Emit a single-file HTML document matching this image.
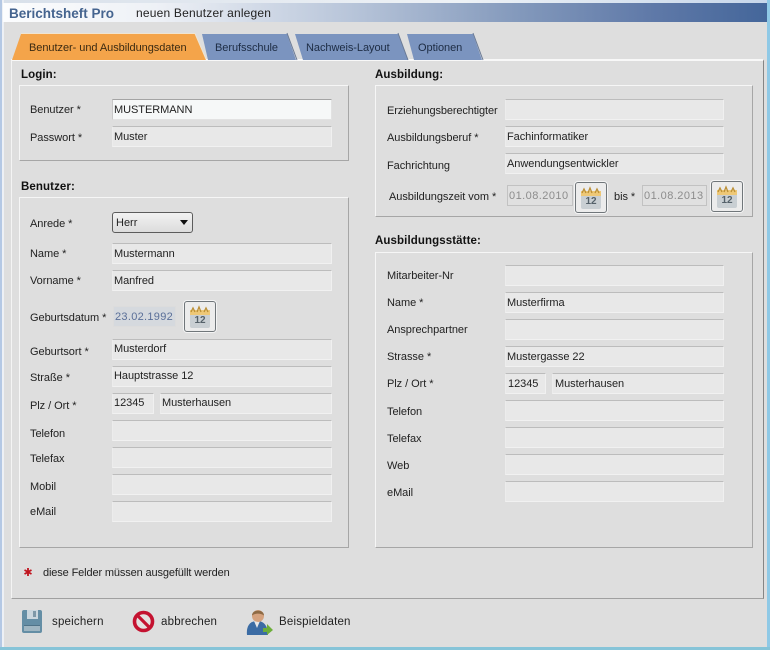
<!DOCTYPE html>
<html lang="de">
<head>
<meta charset="utf-8">
<title>Berichtsheft Pro</title>
<style>
html,body{margin:0;padding:0;background:#dedede}
#w{position:relative;width:770px;height:650px;overflow:hidden;background:#dedede;font-family:"Liberation Sans",sans-serif;font-size:11px;color:#222}
#w div,#w svg{position:absolute}
.l{height:14px;line-height:14px;white-space:nowrap;letter-spacing:-.05px}
.b{font-size:11.5px;letter-spacing:.2px}
.h{height:14px;line-height:14px;white-space:nowrap;font-weight:bold;color:#111;font-size:11.5px;letter-spacing:.1px}
.f{box-sizing:border-box;height:21px;left:112px;width:220px;background:#e8e8e8;border-top:1px solid #bcbcbc;border-left:1px solid #ececec;border-right:1px solid #f0f0f0;border-bottom:1px solid #f1f1f1;padding-left:1px;line-height:20px;white-space:nowrap;letter-spacing:-.05px}
.r{left:505px;width:219px;padding-left:1px}
.fs{box-sizing:border-box;background:#dedede;border-top:1px solid #f6f6f6;border-left:1px solid #f6f6f6;border-right:1px solid #a6a6a6;border-bottom:1px solid #a6a6a6}
.d{box-sizing:border-box;height:21px;background:#e0e0e0;border:1px solid #c2c2c2;color:#8c8c8c;line-height:20px;padding-left:1px;letter-spacing:.45px;white-space:nowrap}
.c{box-sizing:border-box;width:32px;height:31px;border:1px solid #70767a;border-radius:3px;background:#ececec;box-shadow:0 0 0 1px #f4f4f4}
</style>
</head>
<body>
<div id="w">
<!-- window frame -->
<div style="left:0;top:0;width:770px;height:3px;background:linear-gradient(90deg,#d8e0ea,#eef2f6 60%,#c6d6ea)"></div>
<div style="left:0;top:0;width:2px;height:650px;background:#b4c8e4"></div>
<div style="left:2px;top:0;width:2px;height:650px;background:#edf0f5"></div>
<div style="left:767px;top:0;width:3px;height:650px;background:#8fc9e6"></div>
<div style="left:0;top:647px;width:770px;height:3px;background:#86c4d8"></div>

<!-- title bar -->
<div style="left:3px;top:3px;width:764px;height:19px;background:linear-gradient(90deg,#fcfdfe 0%,#eef1f6 20%,#b9c6da 45%,#8298bb 68%,#5f79a8 85%,#44669a 100%)"></div>
<div style="left:9px;top:6px;height:15px;line-height:15px;font-size:13.500px;font-weight:bold;color:#45648f;white-space:nowrap">Berichtsheft Pro</div>
<div style="left:136px;top:6px;height:15px;line-height:15px;font-size:12px;letter-spacing:.2px;color:#222;white-space:nowrap">neuen Benutzer anlegen</div>

<!-- main panel -->
<div style="left:11px;top:59px;width:753px;height:540px;box-sizing:border-box;background:#dedede;border-top:2px solid #f8f8f8;border-left:1px solid #f4f4f4;border-right:1px solid #858585;border-bottom:1px solid #a0a0a0"></div>

<!-- tabs -->
<svg style="left:0;top:28px" width="500" height="34" viewBox="0 28 500 34">
<polygon points="202,34 287,34 296,60 208,60" fill="#7b94bf"/>
<polygon points="295,34 398,34 408,60 303,60" fill="#7b94bf"/>
<polygon points="407,34 473,34 482,60 414,60" fill="#7b94bf"/>
<polygon points="12,60 21,34 195,34 206,60" fill="#f4a44a"/>
<polyline points="21,33.500 195,33.500 206,59" fill="none" stroke="#f0e4d0" stroke-width="1"/>
<polyline points="287,33 297,60" fill="none" stroke="#6a7a95" stroke-width="1"/>
<polyline points="398,33 408,60" fill="none" stroke="#6a7a95" stroke-width="1"/>
<polyline points="473,33 483,60" fill="none" stroke="#6a7a95" stroke-width="1"/>
</svg>
<div class="l" style="left:29px;top:41px;color:#3a2a12">Benutzer- und Ausbildungsdaten</div>
<div class="l" style="left:215px;top:41px;color:#1d2c44">Berufsschule</div>
<div class="l" style="left:306px;top:41px;color:#1d2c44">Nachweis-Layout</div>
<div class="l" style="left:418px;top:41px;color:#1d2c44">Optionen</div>

<!-- headings -->
<div class="h" style="left:21px;top:68px">Login:</div>
<div class="h" style="left:375px;top:68px">Ausbildung:</div>
<div class="h" style="left:21px;top:180px">Benutzer:</div>
<div class="h" style="left:375px;top:234px">Ausbildungsstätte:</div>

<!-- fieldsets -->
<div class="fs" style="left:19px;top:85px;width:330px;height:76px"></div>
<div class="fs" style="left:19px;top:197px;width:330px;height:351px"></div>
<div class="fs" style="left:375px;top:85px;width:378px;height:132px"></div>
<div class="fs" style="left:375px;top:252px;width:378px;height:296px"></div>

<!-- login -->
<div class="l" style="left:30px;top:103px">Benutzer *</div>
<div class="f" style="top:99px;background:#f6f8f8;border-top:1px solid #a4a4a4;border-left:1px solid #c8c8c8;border-right:1px solid #e2e2e2;border-bottom:1px solid #e2e2e2">MUSTERMANN</div>
<div class="l" style="left:30px;top:131px">Passwort *</div>
<div class="f" style="top:126px">Muster</div>

<!-- benutzer -->
<div class="l" style="left:30px;top:217px">Anrede *</div>
<div style="left:112px;top:212px;width:81px;height:21px;box-sizing:border-box;border:1px solid #5c5c5c;border-radius:3px;background:linear-gradient(#f2f2f2,#dcdcdc);padding-left:3px;line-height:20px;color:#222">Herr</div>
<svg style="left:180px;top:220px" width="9" height="5"><polygon points="0,0 8,0 4,5" fill="#111"/></svg>
<div class="l" style="left:30px;top:247px">Name *</div>
<div class="f" style="top:243px">Mustermann</div>
<div class="l" style="left:30px;top:274px">Vorname *</div>
<div class="f" style="top:270px">Manfred</div>
<div class="l" style="left:30px;top:311px">Geburtsdatum *</div>
<div class="d" style="left:113px;top:306px;width:63px;background:#d5d9de;border-color:#dcdcdc;color:#5a6f98;letter-spacing:.3px">23.02.1992</div>
<div class="c" style="left:184px;top:301px"></div>
<svg style="left:186px;top:303px" width="28" height="27" viewBox="0 0 28 27"><rect x="4" y="7" width="20" height="18" rx="2" fill="#c9cfd3"/><rect x="4" y="7" width="20" height="5" fill="#eec877"/><path d="M5 9l2-4 2 4M11 9l2-5 2 5M18 9l2-4 2 4" fill="none" stroke="#bb8f35" stroke-width="1.300"/><text x="14" y="20" font-size="10" font-weight="bold" fill="#55616a" text-anchor="middle" font-family="Liberation Sans,sans-serif">12</text></svg>
<div class="l" style="left:30px;top:345px">Geburtsort *</div>
<div class="f" style="top:339px;line-height:19px">Musterdorf</div>
<div class="l" style="left:30px;top:371px">Straße *</div>
<div class="f" style="top:366px;line-height:19px">Hauptstrasse 12</div>
<div class="l" style="left:30px;top:399px">Plz / Ort *</div>
<div class="f" style="top:393px;width:42px;line-height:19px">12345</div>
<div class="f" style="top:393px;left:160px;width:172px;line-height:19px">Musterhausen</div>
<div class="l" style="left:30px;top:427px">Telefon</div>
<div class="f" style="top:420px"></div>
<div class="l" style="left:30px;top:452px">Telefax</div>
<div class="f" style="top:447px"></div>
<div class="l" style="left:30px;top:480px">Mobil</div>
<div class="f" style="top:474px"></div>
<div class="l" style="left:30px;top:505px">eMail</div>
<div class="f" style="top:501px"></div>

<!-- ausbildung -->
<div class="l" style="left:387px;top:104px;letter-spacing:-.12px">Erziehungsberechtigter</div>
<div class="f r" style="top:99px"></div>
<div class="l" style="left:387px;top:131px">Ausbildungsberuf *</div>
<div class="f r" style="top:126px">Fachinformatiker</div>
<div class="l" style="left:387px;top:159px">Fachrichtung</div>
<div class="f r" style="top:153px">Anwendungsentwickler</div>
<div class="l" style="left:389px;top:190px">Ausbildungszeit vom *</div>
<div class="d" style="left:507px;top:185px;width:66px">01.08.2010</div>
<div class="c" style="left:575px;top:182px"></div>
<svg style="left:577px;top:184px" width="28" height="27" viewBox="0 0 28 27"><rect x="4" y="7" width="20" height="18" rx="2" fill="#c9cfd3"/><rect x="4" y="7" width="20" height="5" fill="#eec877"/><path d="M5 9l2-4 2 4M11 9l2-5 2 5M18 9l2-4 2 4" fill="none" stroke="#bb8f35" stroke-width="1.300"/><text x="14" y="20" font-size="10" font-weight="bold" fill="#55616a" text-anchor="middle" font-family="Liberation Sans,sans-serif">12</text></svg>
<div class="l" style="left:614px;top:190px">bis *</div>
<div class="d" style="left:642px;top:185px;width:65px">01.08.2013</div>
<div class="c" style="left:711px;top:181px"></div>
<svg style="left:713px;top:183px" width="28" height="27" viewBox="0 0 28 27"><rect x="4" y="7" width="20" height="18" rx="2" fill="#c9cfd3"/><rect x="4" y="7" width="20" height="5" fill="#eec877"/><path d="M5 9l2-4 2 4M11 9l2-5 2 5M18 9l2-4 2 4" fill="none" stroke="#bb8f35" stroke-width="1.300"/><text x="14" y="20" font-size="10" font-weight="bold" fill="#55616a" text-anchor="middle" font-family="Liberation Sans,sans-serif">12</text></svg>

<!-- ausbildungsstaette -->
<div class="l" style="left:387px;top:269px">Mitarbeiter-Nr</div>
<div class="f r" style="top:265px"></div>
<div class="l" style="left:387px;top:296px">Name *</div>
<div class="f r" style="top:292px">Musterfirma</div>
<div class="l" style="left:387px;top:323px">Ansprechpartner</div>
<div class="f r" style="top:319px"></div>
<div class="l" style="left:387px;top:350px">Strasse *</div>
<div class="f r" style="top:346px">Mustergasse 22</div>
<div class="l" style="left:387px;top:377px">Plz / Ort *</div>
<div class="f r" style="top:373px;width:41px;padding-left:2px">12345</div>
<div class="f" style="top:373px;left:552px;width:172px;padding-left:2px">Musterhausen</div>
<div class="l" style="left:387px;top:405px">Telefon</div>
<div class="f r" style="top:400px"></div>
<div class="l" style="left:387px;top:432px">Telefax</div>
<div class="f r" style="top:427px"></div>
<div class="l" style="left:387px;top:459px">Web</div>
<div class="f r" style="top:454px"></div>
<div class="l" style="left:387px;top:486px">eMail</div>
<div class="f r" style="top:481px"></div>

<!-- note -->
<svg style="left:23px;top:567px" width="10" height="10" viewBox="0 0 10 10"><path d="M5 1v8M1.500 3l7 4M8.500 3l-7 4" stroke="#c0141e" stroke-width="1.800" fill="none"/></svg>
<div class="l" style="left:43px;top:566px;letter-spacing:-.13px">diese Felder müssen ausgefüllt werden</div>

<!-- bottom buttons -->
<svg style="left:21px;top:609px" width="22" height="25" viewBox="0 0 22 25">
<path d="M3 1h16a2 2 0 0 1 2 2v19a2 2 0 0 1-2 2H3a2 2 0 0 1-2-2V3a2 2 0 0 1 2-2z" fill="#648ea5"/>
<rect x="6" y="1" width="11" height="9" fill="#c9d6de"/><rect x="12" y="2" width="3" height="6" fill="#7d98a8"/>
<rect x="3" y="17" width="16" height="5" fill="#9fb6c2"/><rect x="3" y="16" width="16" height="1" fill="#4f7388"/>
</svg>
<div class="l b" style="left:52px;top:615px">speichern</div>
<svg style="left:132px;top:610px" width="23" height="23" viewBox="0 0 23 23">
<circle cx="11.500" cy="11.500" r="9" fill="#e4e0e0" stroke="#c41230" stroke-width="3.600"/>
<path d="M5.500 5.500l12 12" stroke="#c41230" stroke-width="3.200"/>
</svg>
<div class="l b" style="left:161px;top:615px">abbrechen</div>
<svg style="left:246px;top:609px" width="27" height="27" viewBox="0 0 27 27">
<path d="M1 26c-1-9 3-14 10-14s11 5 11 14z" fill="#3c6ca4"/>
<path d="M8 12l3 7 3-7z" fill="#e8e8e8"/>
<circle cx="12" cy="7" r="6" fill="#d5a27e"/>
<path d="M6 6.500C6 0 18 0 18 6.500 14.500 4 9.500 4 6 6.500z" fill="#8e6a44"/>
<path d="M17 19h4v-4l6 6-6 5v-3h-4z" fill="#6cae3a"/>
</svg>
<div class="l b" style="left:279px;top:615px">Beispieldaten</div>
</div>
</body>
</html>
